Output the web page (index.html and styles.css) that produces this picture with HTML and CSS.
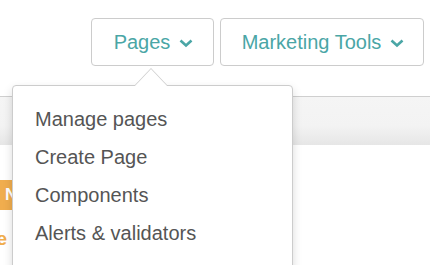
FILE: index.html
```html
<!DOCTYPE html>
<html lang="en">
<head>
    <meta charset="UTF-8">
    <meta name="viewport" content="width=device-width, initial-scale=1.0">
    <title>Pages menu</title>
    <link rel="stylesheet" href="styles.css">
</head>
<body>

<div class="topbar">
    <button class="nav-btn nav-pages">Pages
        <svg class="caret" width="14" height="9" viewBox="0 0 14 9"><polyline points="1.5,1.5 7,6.5 12.5,1.5" fill="none" stroke="#4aa6a6" stroke-width="2.6"/></svg>
    </button>
    <button class="nav-btn nav-tools">Marketing Tools
        <svg class="caret" width="14" height="9" viewBox="0 0 14 9"><polyline points="1.5,1.5 7,6.5 12.5,1.5" fill="none" stroke="#4aa6a6" stroke-width="2.6"/></svg>
    </button>
</div>

<div class="toolbar"></div>

<div class="content">
    <span class="badge">New</span>
    <div class="orange-row"><span class="orange-link">More</span></div>
</div>

<div class="dropdown">
    <a href="#" class="dropdown-item">Manage pages</a>
    <a href="#" class="dropdown-item">Create Page</a>
    <a href="#" class="dropdown-item">Components</a>
    <a href="#" class="dropdown-item">Alerts &amp; validators</a>
</div>

</body>
</html>
```

FILE: styles.css
```css
body {
    font-family: "Liberation Sans", Arial, sans-serif;
    background-color: #fff;
    margin: 0;
    padding: 0;
    overflow: hidden;
}
.topbar {
    display: flex;
    justify-content: flex-end;
    gap: 6px;
    padding: 18px 6px 0 0;
    height: 48px;
}
.nav-btn {
    display: flex;
    align-items: center;
    justify-content: center;
    gap: 9px;
    height: 48px;
    padding: 0;
    background-color: #fff;
    border: 1px solid #ccc;
    border-radius: 4px;
    color: #4aa6a6;
    font-family: inherit;
    font-size: 20px;
    cursor: pointer;
}
.nav-pages {
    width: 123px;
    padding-left: 2px;
}
.nav-tools {
    width: 204px;
    padding-left: 2px;
}
.caret {
    display: block;
    margin-top: 2px;
}
.toolbar {
    margin-top: 30px;
    height: 48px;
    border-top: 1px solid #cfcfcf;
    background: linear-gradient(#f5f5f5 0%, #f3f3f3 60%, #e6e6e6 100%);
}
.content {
    overflow: hidden;
    padding-top: 35px;
}
.badge {
    display: inline-block;
    margin-left: -3px;
    padding: 0 8px;
    line-height: 30px;
    background-color: #f0ad4e;
    color: #fff;
    font-weight: bold;
    font-size: 17px;
}
.orange-row {
    display: flex;
    justify-content: flex-end;
    width: 7px;
    margin-top: 18px;
}
.orange-link {
    color: #f0ad4e;
    font-size: 19px;
    font-weight: bold;
    white-space: nowrap;
}
.dropdown {
    position: absolute;
    top: 85px;
    left: 12px;
    width: 279px;
    height: 200px;
    padding-top: 14px;
    background-color: #fff;
    border: 1px solid #ccc;
    border-radius: 4px;
    box-shadow: 0 4px 10px rgba(0, 0, 0, 0.15);
}
.dropdown::before,
.dropdown::after {
    content: '';
    position: absolute;
    left: 121px;
    border: 17px solid transparent;
    border-top: none;
}
.dropdown::before {
    top: -18px;
    border-bottom: 18px solid #ccc;
}
.dropdown::after {
    top: -17px;
    border-bottom: 18px solid #fff;
}
.dropdown-item {
    display: block;
    padding: 0 22px;
    line-height: 38px;
    color: #555;
    font-size: 20px;
    text-decoration: none;
}
```
